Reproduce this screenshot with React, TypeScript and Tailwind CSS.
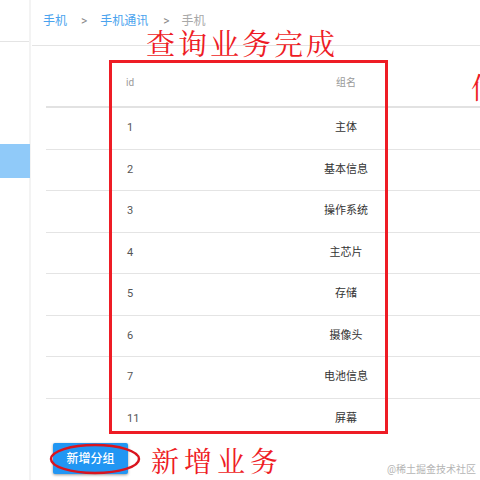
const rows = [
  ["1", "主体"],
  ["2", "基本信息"],
  ["3", "操作系统"],
  ["4", "主芯片"],
  ["5", "存储"],
  ["6", "摄像头"],
  ["7", "电池信息"],
  ["11", "屏幕"],
];

const font = "font-['Roboto','Noto_Sans_CJK_SC',sans-serif]";
const hand = "font-['Noto_Serif_CJK_SC','Noto_Sans_CJK_SC',serif]";

export default function App() {
  return (
    <div className={`relative flex h-[480px] w-[480px] overflow-hidden bg-white ${font}`}>
      {/* Sidebar */}
      <div className="w-[31px] shrink-0 border-r-2 border-[#f3f3f3]">
        <div className="h-[42px] border-b border-[#e4e4e4]" />
        <div className="mt-[102px] h-[34px] w-[30px] bg-[#90caf9]" />
      </div>

      {/* Main */}
      <div className="min-w-0 flex-1">
        <div className="ml-[1px] flex h-[46px] items-start border-b border-[#e4e4e4] pl-[11px] pt-[13px] text-[12px] leading-[17px]">
          <span className="text-[#4aa3ee]">手机</span>
          <span className="ml-[14px] text-[#8a8a8a]">&gt;</span>
          <span className="ml-[13px] text-[#4aa3ee]">手机通讯</span>
          <span className="ml-[15px] text-[#8a8a8a]">&gt;</span>
          <span className="ml-[12px] text-[#a8a8a8]">手机</span>
        </div>

        <div className="ml-[15px] w-[440px]">
          <div className="flex h-[62px] items-center border-b-2 border-[#e2e2e2] pt-[13px] text-[10px] text-[#9a9a9a]">
            <div className="w-[200px] pl-[80px]">id</div>
            <div className="w-[200px] text-center">组名</div>
          </div>
          {rows.map(([id, name], i) => (
            <div
              key={id}
              className={`flex h-[41.5px] items-center text-[11px] text-[#555] ${
                i < rows.length - 1 ? "border-b border-[#e4e4e4]" : ""
              }`}
            >
              <div className="w-[200px] pl-[81px]">{id}</div>
              <div className="w-[200px] text-center text-[#333]">{name}</div>
            </div>
          ))}
        </div>

        <div className="ml-[22px] mt-[3px] flex h-[31px] w-[75px] items-center justify-center rounded-[2px] bg-[#2196f3] text-[12px] font-medium text-white shadow-[0_1px_3px_rgba(0,0,0,0.4)]">
          新增分组
        </div>
      </div>

      {/* Red annotations */}
      <div className="absolute left-[109px] top-[60px] h-[374px] w-[279px] border-[3px] border-[#ee1c25]" />
      <svg className="absolute left-[48px] top-[442px]" width="95" height="35" viewBox="0 0 95 35" fill="none">
        <ellipse cx="47" cy="17" rx="44" ry="14" stroke="#d9141e" strokeWidth="2.5" />
      </svg>
      <div className={`absolute left-[146px] top-[25px] text-[29px] leading-[36px] tracking-[3px] text-[#ee1c25] ${hand}`}>
        查询业务完成
      </div>
      <div className={`absolute left-[151px] top-[443px] text-[28px] leading-[34px] tracking-[5px] text-[#ee1c25] ${hand}`}>
        新增业务
      </div>
      <div className={`absolute left-[471px] top-[69px] text-[29px] leading-[36px] text-[#ee1c25] ${hand}`}>
        信
      </div>
      <div className="absolute left-[387px] top-[463px] text-[10px] leading-[14px] text-[#b5b5b5]">
        @稀土掘金技术社区
      </div>
    </div>
  );
}
